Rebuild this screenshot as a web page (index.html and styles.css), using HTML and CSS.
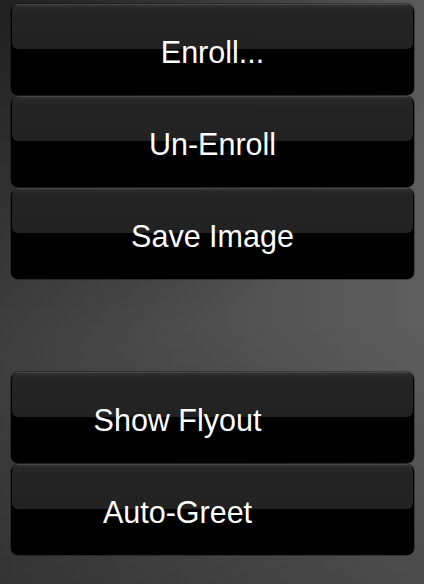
FILE: index.html
```html
<!DOCTYPE html>
<html>
<head>
<meta charset="utf-8">
<link rel="stylesheet" href="styles.css">
</head>
<body>
<div class="panel">
  <div class="btn"><span class="label">Enroll...</span></div>
  <div class="btn"><span class="label">Un-Enroll</span></div>
  <div class="btn"><span class="label">Save Image</span></div>
  <div class="spacer"></div>
  <div class="btn btn-left"><span class="label">Show Flyout</span></div>
  <div class="btn btn-left"><span class="label">Auto-Greet</span></div>
</div>
</body>
</html>
```

FILE: styles.css
```css
html, body {
  margin: 0;
  padding: 0;
  width: 424px;
  height: 584px;
  overflow: hidden;
}
body {
  background:
    linear-gradient(to bottom, rgba(0,0,0,0) 55%, rgba(0,0,0,0.2) 100%),
    radial-gradient(ellipse 460px 360px at 0 0, rgba(0,0,0,0.5), rgba(0,0,0,0) 100%),
    linear-gradient(to right, #404040, #5e5e5e);
  font-family: "Liberation Sans", Arial, sans-serif;
}
.panel {
  display: flex;
  flex-direction: column;
  gap: 1px;
  padding: 4px 10px 0 11px;
}
.spacer {
  height: 91px;
}
.btn {
  position: relative;
  box-sizing: border-box;
  height: 91px;
  background: #000;
  border-radius: 7px;
  border-top: 1px solid #484848;
  box-shadow: 0 0 0 0.5px rgba(0,0,0,0.6);
  padding-top: 32px;
  text-align: center;
  color: #fff;
  font-size: 30.5px;
  line-height: 30px;
}
.btn::before {
  content: "";
  position: absolute;
  top: 0;
  left: 1px;
  right: 1px;
  height: 44px;
  border-radius: 6px;
  background: linear-gradient(to bottom, #333 0, #282828 3px, #242424 8px, #222 100%);
}
.label {
  position: relative;
}
.btn-left {
  padding-right: 70px;
}
```
